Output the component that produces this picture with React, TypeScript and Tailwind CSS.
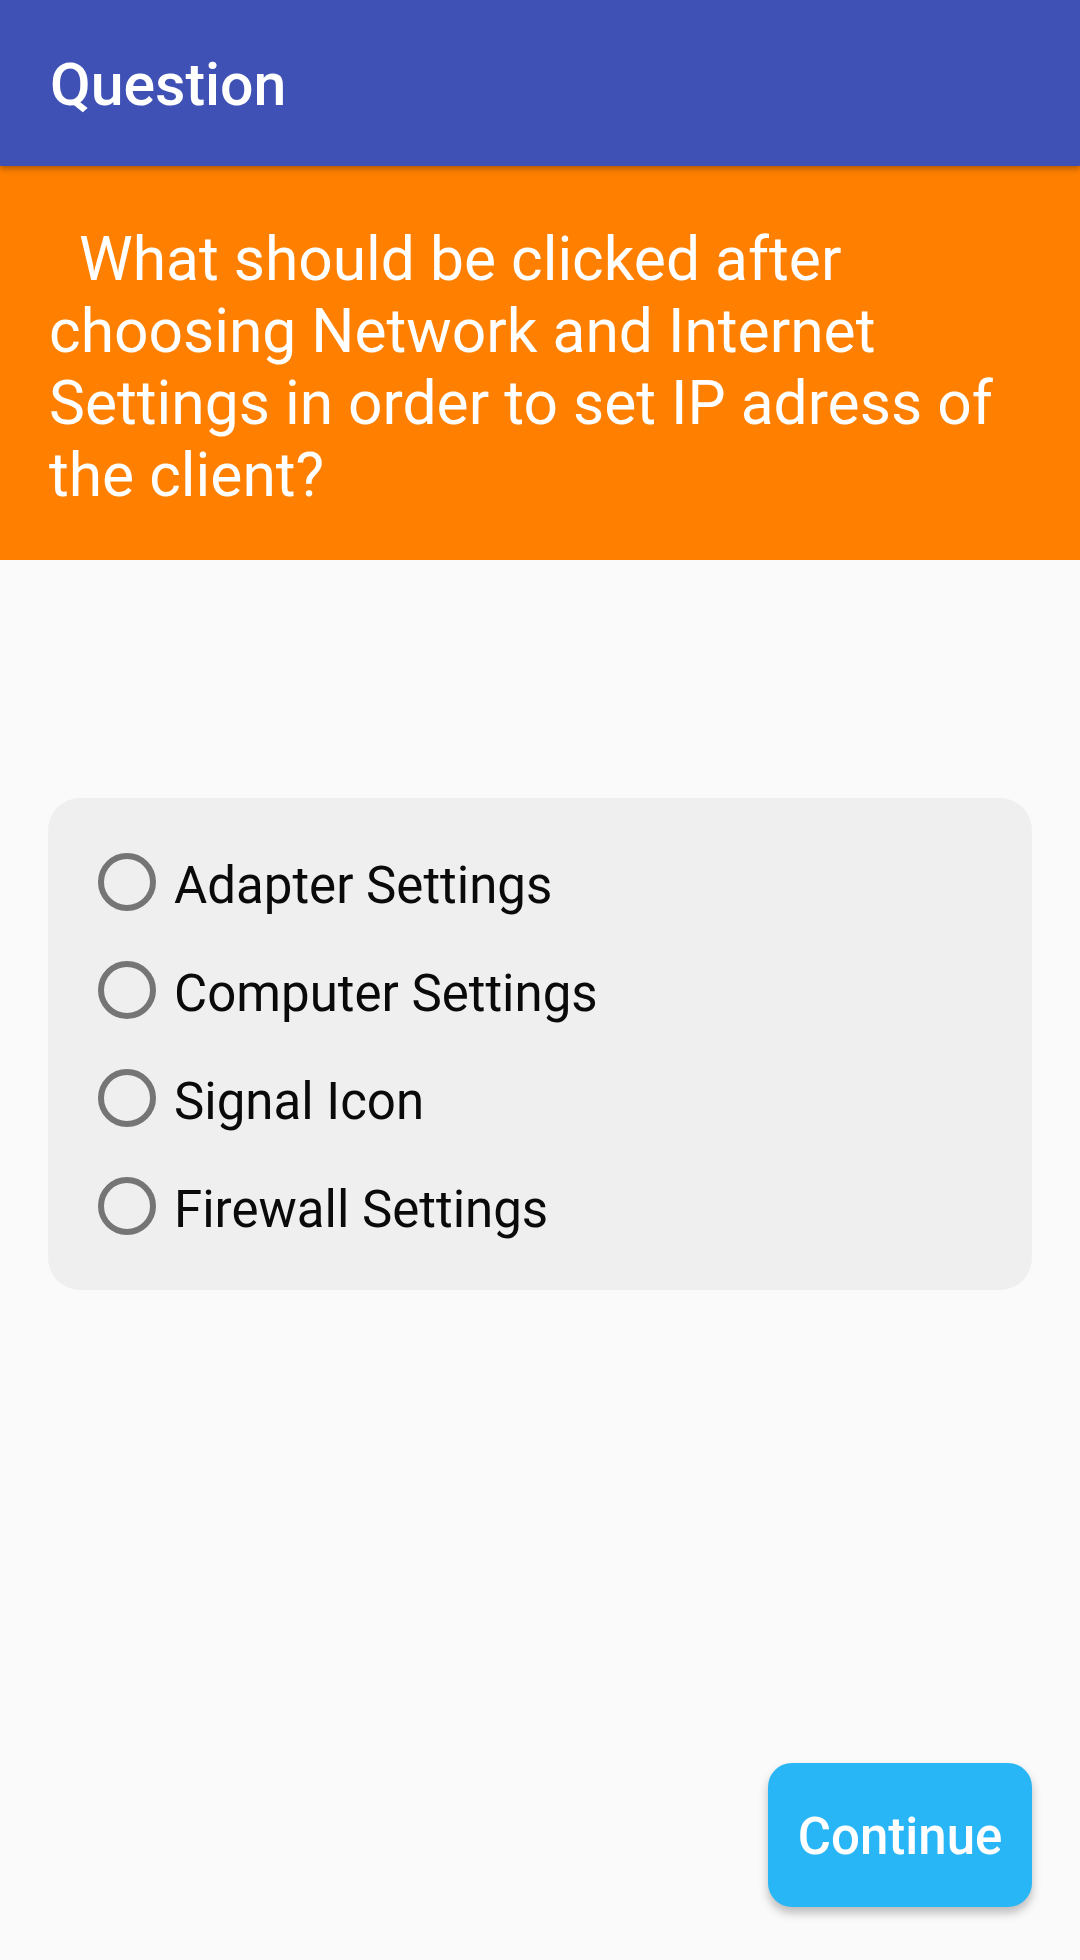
import React from "react";

const options = ["Adapter Settings", "Computer Settings", "Signal Icon", "Firewall Settings"];

export default function App() {
  return (
    <div
      className="flex min-h-screen w-full flex-col bg-[#fafafa]"
      style={{ fontFamily: "Roboto, 'Noto Sans', sans-serif" }}
    >
      <header className="relative z-10 flex h-[166px] items-center bg-[#3f51b5] pl-[50px] pt-[2px] shadow-[0_3px_6px_rgba(0,0,0,0.3)]">
        <h1 className="text-[59px] font-medium leading-none text-white">Question</h1>
      </header>

      <section className="bg-[#ff8000] pb-[48px] pl-[49px] pr-[50px] pt-[58px]">
        <p className="text-[60.5px] leading-[72px] text-white">
          {"\u00a0\u00a0"}What should be clicked after choosing Network and Internet Settings in order to set IP adress of the client?
        </p>
      </section>

      <div className="mx-[48px] mt-[238px] rounded-[32px] bg-[#efefef] py-[30px] pl-[50px]">
        {options.map((o) => (
          <div key={o} className="flex h-[108px] items-center">
            <span className="box-border h-[58px] w-[58px] shrink-0 rounded-full border-[6px] border-[#757575]" />
            <span className="ml-[18px] pt-[6px] text-[51px] leading-none text-[#0a0a0a]">{o}</span>
          </div>
        ))}
      </div>

      <div className="flex-1" />

      <div className="flex justify-end pb-[53px] pr-[48px]">
        <button className="flex h-[144px] w-[264px] items-center justify-center rounded-[24px] bg-[#29b6f6] pt-[4px] text-[51px] font-medium text-white shadow-[0_6px_10px_rgba(0,0,0,0.25)]">
          Continue
        </button>
      </div>
    </div>
  );
}
